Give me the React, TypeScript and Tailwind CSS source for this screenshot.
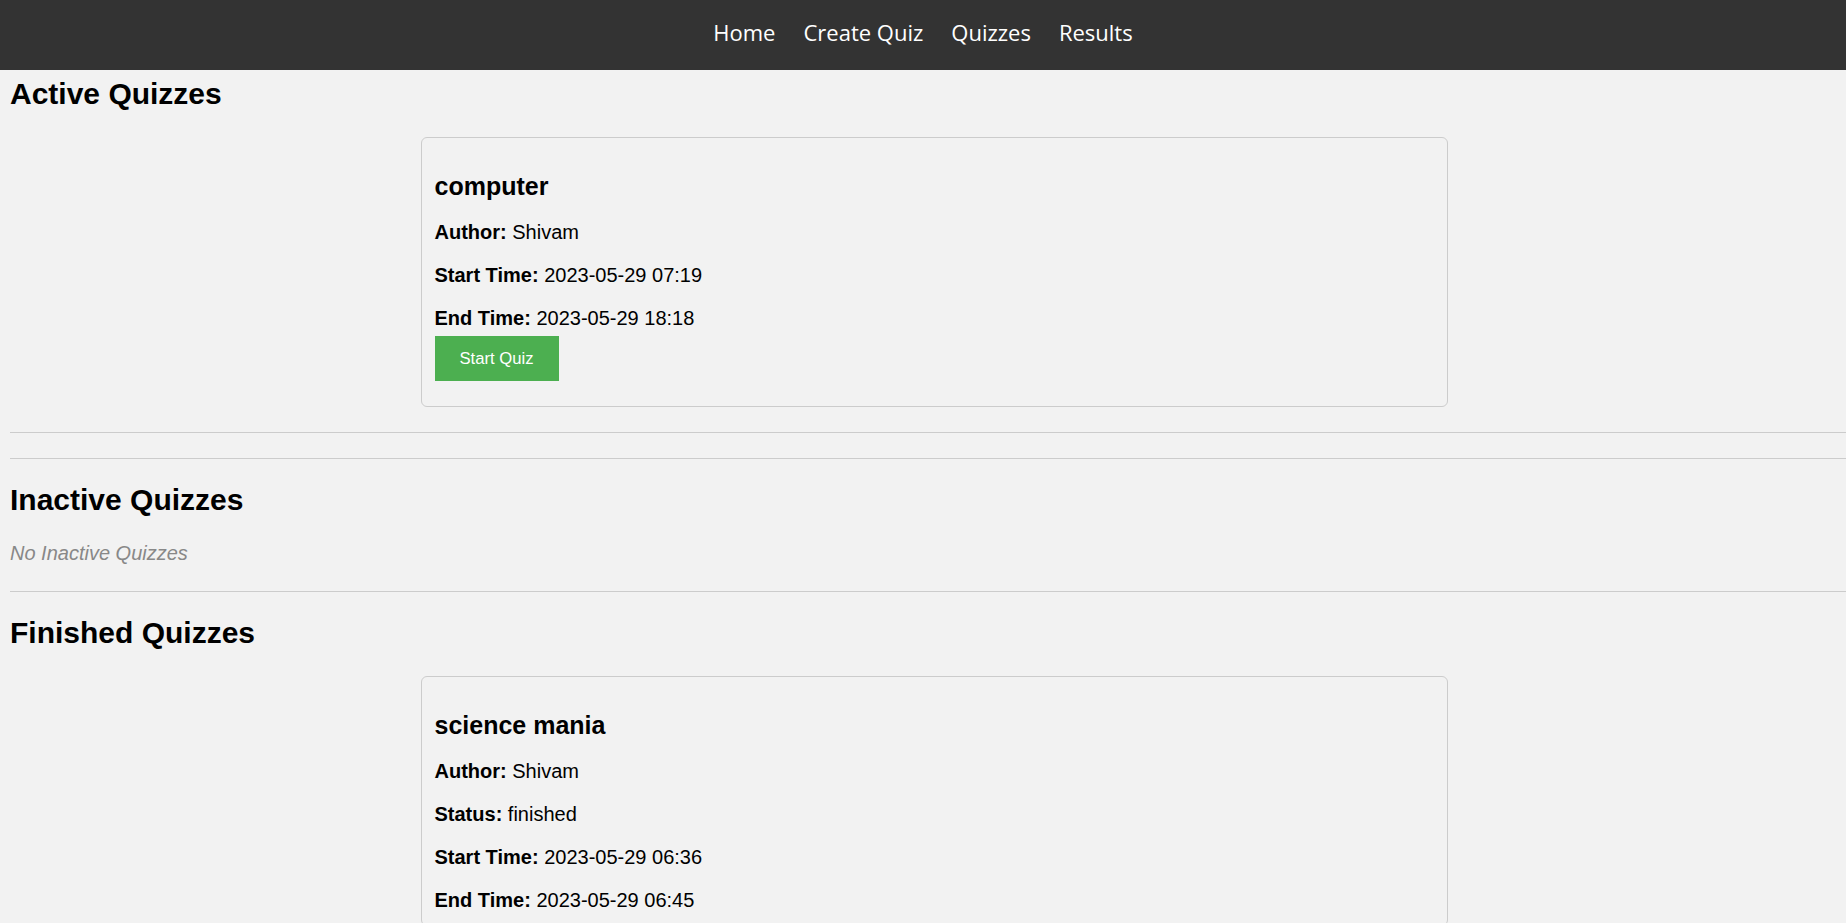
import React from "react";

type Field = { label: string; value: string };

function QuizCard({ title, fields, button }: { title: string; fields: Field[]; button?: string }) {
  return (
    <div className="ml-[411px] w-[1027px] border border-[#ccc] rounded-[6px] p-[12.5px]">
      <h3 className="mt-[20.5px] text-[25px] leading-[30px] font-bold text-black">{title}</h3>
      {fields.map((f) => (
        <p key={f.label} className="mt-[20px] text-[20px] leading-[23px] text-black">
          <strong className="font-bold">{f.label}:</strong> {f.value}
        </p>
      ))}
      {button && (
        <button className="mt-[6px] mb-[12.5px] block h-[45px] px-[25px] bg-[#4CAF50] text-white text-[16.67px] leading-[20px]">
          {button}
        </button>
      )}
    </div>
  );
}

export default function App() {
  return (
    <div className="min-h-screen bg-[#f2f2f2] font-['Liberation_Sans',Arial,sans-serif] text-black overflow-hidden">
      <nav className="h-[70px] bg-[#333333] flex items-center justify-center gap-[28px] pb-[6px] font-['Comic_Sans_MS','Open_Sans',sans-serif] text-[22px] leading-[30px] text-white">
        <a>Home</a>
        <a>Create Quiz</a>
        <a>Quizzes</a>
        <a>Results</a>
      </nav>
      <main className="pl-[10px]">
        <h2 className="mt-[7px] text-[30px] leading-[34px] font-bold">Active Quizzes</h2>
        <div className="mt-[26px]">
          <QuizCard
            title="computer"
            fields={[
              { label: "Author", value: "Shivam" },
              { label: "Start Time", value: "2023-05-29 07:19" },
              { label: "End Time", value: "2023-05-29 18:18" },
            ]}
            button="Start Quiz"
          />
        </div>
        <div className="mt-[25px] h-px bg-[#cccccc]" />
        <div className="mt-[25px] h-px bg-[#cccccc]" />
        <h2 className="mt-[24px] text-[30px] leading-[34px] font-bold">Inactive Quizzes</h2>
        <p className="mt-[25px] text-[20px] leading-[23px] italic text-[#888888]">No Inactive Quizzes</p>
        <div className="mt-[26px] h-px bg-[#cccccc]" />
        <h2 className="mt-[24px] text-[30px] leading-[34px] font-bold">Finished Quizzes</h2>
        <div className="mt-[26px] pb-[40px]">
          <QuizCard
            title="science mania"
            fields={[
              { label: "Author", value: "Shivam" },
              { label: "Status", value: "finished" },
              { label: "Start Time", value: "2023-05-29 06:36" },
              { label: "End Time", value: "2023-05-29 06:45" },
            ]}
          />
        </div>
      </main>
    </div>
  );
}
